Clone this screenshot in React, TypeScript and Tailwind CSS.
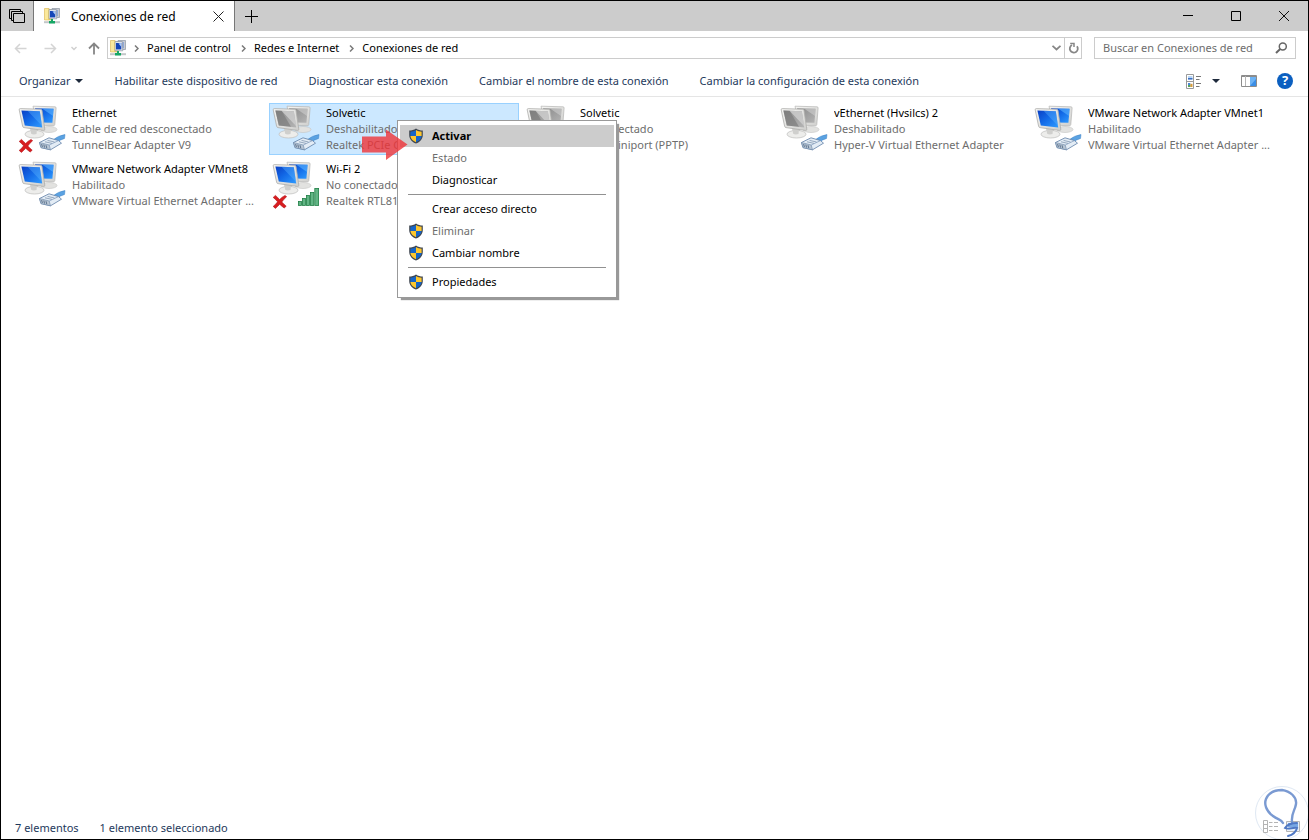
import type { ReactNode } from "react";

type AdapterState = "on" | "off";

interface Adapter {
  name: string;
  status: string;
  device: string;
  state: AdapterState;
  broken?: boolean;
  wifi?: boolean;
  selected?: boolean;
}

const adapters: Adapter[] = [
  { name: "Ethernet", status: "Cable de red desconectado", device: "TunnelBear Adapter V9", state: "on", broken: true },
  { name: "Solvetic", status: "Deshabilitado", device: "Realtek PCIe GBE", state: "off", selected: true },
  { name: "Solvetic", status: "Desconectado", device: "WAN Miniport (PPTP)", state: "off" },
  { name: "vEthernet (Hvsilcs) 2", status: "Deshabilitado", device: "Hyper-V Virtual Ethernet Adapter", state: "off" },
  { name: "VMware Network Adapter VMnet1", status: "Habilitado", device: "VMware Virtual Ethernet Adapter ...", state: "on" },
  { name: "VMware Network Adapter VMnet8", status: "Habilitado", device: "VMware Virtual Ethernet Adapter ...", state: "on" },
  { name: "Wi-Fi 2", status: "No conectado", device: "Realtek RTL81", state: "on", broken: true, wifi: true },
];

function Gradients() {
  return (
    <svg width="0" height="0" className="absolute" aria-hidden="true">
      <defs>
        <linearGradient id="screen-on" x1="0" y1="0" x2="1" y2="1">
          <stop offset="0" stopColor="#0a3fc4" />
          <stop offset="0.45" stopColor="#1268e6" />
          <stop offset="1" stopColor="#2f9bff" />
        </linearGradient>
        <linearGradient id="screen-off" x1="0" y1="0" x2="1" y2="1">
          <stop offset="0" stopColor="#8a8a8a" />
          <stop offset="1" stopColor="#b4b4b4" />
        </linearGradient>
        <linearGradient id="frame" x1="0" y1="0" x2="1" y2="1">
          <stop offset="0" stopColor="#f6f6f4" />
          <stop offset="1" stopColor="#cfcfcd" />
        </linearGradient>
      </defs>
    </svg>
  );
}

function AdapterIcon({ state, broken, wifi }: { state: AdapterState; broken?: boolean; wifi?: boolean }) {
  const on = state === "on";
  const fill = on ? "url(#screen-on)" : "url(#screen-off)";
  const sheen = on ? "#5cb4ff" : "#cfcfcf";
  return (
    <svg width="56" height="52" viewBox="0 0 56 52" className="shrink-0" aria-hidden="true">
      <ellipse cx="34" cy="26.5" rx="8" ry="3" fill="#e2e2e0" stroke="#c4c4c2" strokeWidth="0.6" />
      <path d="M18 3.2 L40 3.8 Q41.2 3.9 41.1 5 L39.8 21.5 Q39.6 22.8 38.2 22.8 L22 22 Z" fill="url(#frame)" stroke="#b5b5b3" strokeWidth="0.7" />
      <path d="M20 5.2 L38.6 5.7 L37.4 19.8 L24 19.5 Z" fill={fill} />
      <path d="M27 5.4 L38.6 5.7 L38 13 Z" fill={sheen} opacity="0.6" />
      <path d="M15 24 L23 25.5 L22.5 31 L16 30 Z" fill="#c9c9c7" />
      <ellipse cx="19.5" cy="31.2" rx="9.5" ry="3.8" fill="#ededeb" stroke="#bdbdbb" strokeWidth="0.7" />
      <path d="M15.5 25 L22 26 L21.5 31 Q18 32 16 30.5 Z" fill="#cfcfcd" />
      <path d="M5.2 5.6 L25.5 6.2 Q26.8 6.3 27 7.5 L29.8 26.2 Q29.9 27.6 28.4 27.4 L9 24.6 Q7.8 24.4 7.6 23.2 L4.2 6.8 Q4.1 5.6 5.2 5.6 Z" fill="url(#frame)" stroke="#adadab" strokeWidth="0.8" />
      <path d="M6.4 7.4 L24.8 8.2 L27.2 24.6 L9.8 22.4 Z" fill={fill} />
      <path d="M12.5 7.7 L24.8 8.2 L27 23 Z" fill={sheen} opacity={on ? 0.4 : 0.8} />
      {!on && <path d="M6.4 7.4 L12.5 7.7 L22 23.8 L9.8 22.4 Z" fill="#777" opacity="0.6" />}
      {wifi ? (
        <g stroke="#1f7f45" strokeWidth="0.8" fill="#62b585">
          <rect x="29.4" y="42.4" width="3" height="4" />
          <rect x="33.4" y="39.4" width="3" height="7" />
          <rect x="37.4" y="36.4" width="3" height="10" />
          <rect x="41.4" y="33.4" width="3.4" height="13" />
          <rect x="45.8" y="29.4" width="3.8" height="17" />
        </g>
      ) : (
        <g strokeLinejoin="round">
          <path d="M38 37 Q43 32.5 50 31.5 L49.5 35.5 Q45 36.5 41.5 40 Z" fill="#5aa2e2" stroke="#3d80c4" strokeWidth="0.5" />
          <path d="M24.5 39.5 L34 34.8 L43.5 37.6 L46.5 40.2 L35.5 46.8 L26 44.6 Z" fill="#e3ecf5" stroke="#5f7fa6" strokeWidth="0.8" />
          <path d="M24.5 39.5 L34.2 42 L35.5 46.8 L26 44.6 Z" fill="#b9c6d4" stroke="#6a86a8" strokeWidth="0.6" />
          <path d="M34.2 42 L43.5 37.6" stroke="#7c98ba" strokeWidth="0.7" />
          <path d="M26.6 41 L27.4 44 M28.8 41.6 L29.6 44.6 M31 42.2 L31.8 45.2" stroke="#46607e" strokeWidth="0.8" />
          <path d="M30 38.8 L37 40.4 M32.5 37.4 L39.5 39" stroke="#8197b0" strokeWidth="0.8" />
        </g>
      )}
      {broken && (
        <path
          d="M4.2 38.4 L6.4 36.4 Q8.6 38.2 10.6 40.6 Q13 37.8 16.2 36.4 L17.6 37.8 Q14.8 40 12.8 43 Q14.8 45.2 17.2 47.2 L15.2 49 Q12.8 47.4 10.7 45.2 Q8.6 47.6 6.4 49.4 L4.2 47.4 Q6.8 45.4 8.6 42.8 Q6.6 40.4 4.2 38.4 Z"
          fill="#d81d20"
          stroke="#b00f14"
          strokeWidth="0.6"
        />
      )}
    </svg>
  );
}

function NetworkFolderIcon() {
  return (
    <svg width="16" height="16" viewBox="0 0 16 16" className="shrink-0" aria-hidden="true">
      <path d="M0.5 0.5 H5 L6 1.5 H8 V12 H0.5 Z" fill="#f6d76c" stroke="#dcb95a" strokeWidth="0.6" />
      <path d="M1 1 H4 V11.5 H1 Z" fill="#fbe99c" />
      <path d="M8 0.5 H15.5 V9.5 H8 Z" fill="#c9ccd2" stroke="#8c95a4" strokeWidth="0.7" />
      <path d="M12 2 H14 V8 H12 Z" fill="#8fa9d8" />
      <path d="M5 1.5 H12.3 L12.8 10.8 H5 Z" fill="#dfe3ea" stroke="#8c95a4" strokeWidth="0.7" />
      <path d="M6 3 H11.3 V9.4 H6 Z" fill="#1546b8" />
      <path d="M8.5 3.5 L11 3 V6.5 Z" fill="#a9caf8" />
      <path d="M0 13.2 H16 V15.2 H0 Z" fill="#c3c7c9" />
      <path d="M5 13 H11 V15.6 H5 Z M7 11 H9 V13 H7 Z" fill="#16a765" />
    </svg>
  );
}

function Shield() {
  return (
    <svg width="16" height="16" viewBox="0 0 16 16" className="shrink-0" aria-hidden="true">
      <path d="M8 0.6 C10 2 12.4 2.6 14.8 2.6 V7 C14.8 11 12 14 8 15.6 C4 14 1.2 11 1.2 7 V2.6 C3.6 2.6 6 2 8 0.6 Z" fill="#3f4650" />
      <path d="M8 2 C6.4 3 4.4 3.6 2.4 3.7 V8 H8 Z" fill="#1565c8" />
      <path d="M8 2 C9.6 3 11.6 3.6 13.6 3.7 V8 H8 Z" fill="#fdc72e" />
      <path d="M2.4 8 H8 V14.3 C4.8 12.8 2.7 10.8 2.4 8 Z" fill="#fdc72e" />
      <path d="M13.6 8 H8 V14.3 C11.2 12.8 13.3 10.8 13.6 8 Z" fill="#1565c8" />
    </svg>
  );
}

function MenuItem({ children, shield, bold, disabled }: { children: ReactNode; shield?: boolean; bold?: boolean; disabled?: boolean }) {
  return (
    <button
      type="button"
      role="menuitem"
      disabled={disabled}
      className={
        "flex h-[22px] w-full items-center gap-2 pl-2 text-left " +
        (bold ? "bg-[#cccccc] font-bold text-black" : disabled ? "text-[#6d6d6d]" : "text-black")
      }
    >
      <span className="w-4">{shield && <Shield />}</span>
      {children}
    </button>
  );
}

function ContextMenu() {
  return (
    <div
      role="menu"
      aria-label="Solvetic"
      className="absolute left-[127px] top-4 z-10 w-[220px] border border-[#999999] bg-white px-0.5 py-1 shadow-[3px_3px_1px_-1px_#999999]"
    >
      <MenuItem shield bold>Activar</MenuItem>
      <MenuItem disabled>Estado</MenuItem>
      <MenuItem>Diagnosticar</MenuItem>
      <hr className="mx-2 my-[3px] border-[#919191]" />
      <MenuItem>Crear acceso directo</MenuItem>
      <MenuItem shield disabled>Eliminar</MenuItem>
      <MenuItem shield>Cambiar nombre</MenuItem>
      <hr className="mx-2 my-[3px] border-[#919191]" />
      <MenuItem shield>Propiedades</MenuItem>
    </div>
  );
}

function PointerArrow() {
  return (
    <svg width="46" height="32" viewBox="0 0 46 32" className="pointer-events-none absolute left-[92px] top-[25px] z-20" aria-hidden="true">
      <path d="M0 7.5 H24 V0.5 L45.5 15.5 L24 31 V23.5 H0 Z" fill="#ef3338" opacity="0.8" />
    </svg>
  );
}

function AdapterTile({ adapter }: { adapter: Adapter }) {
  return (
    <li
      className={
        "relative flex h-[52px] border " +
        (adapter.selected ? "border-[#99d1ff] bg-[#cce8ff]" : "border-transparent")
      }
    >
      <div className="-my-px -ml-px">
        <AdapterIcon state={adapter.state} broken={adapter.broken} wifi={adapter.wifi} />
      </div>
      <div className="min-w-0 flex-1 py-px pl-px pr-1 leading-4">
        <p className="truncate text-black">{adapter.name}</p>
        <p className="truncate text-[#6d6d6d]">{adapter.status}</p>
        <p className="truncate text-[#6d6d6d]">{adapter.device}</p>
      </div>
      {adapter.selected && <ContextMenu />}
      {adapter.selected && <PointerArrow />}
    </li>
  );
}

function TitleBar() {
  return (
    <header className="flex h-[30px] shrink-0 bg-[#cccccc] text-black">
      <button type="button" aria-label="Conjuntos" className="flex w-8 items-center justify-center">
        <svg width="17" height="16" viewBox="0 0 17 16" fill="none" stroke="#000">
          <path d="M4.5 5.5 H15.5 V14.5 H4.5 Z" />
          <path d="M4.5 12.5 H2.5 V3.5 H13.5 V5.5" />
          <path d="M2.5 10.5 H0.5 V1.5 H11.5 V3.5" />
        </svg>
      </button>
      <div className="flex w-[202px] items-center border-x border-[#777777] bg-white pl-[10px] pr-2">
        <NetworkFolderIcon />
        <span className="flex-1 pl-[11px] pt-px text-[12px]">Conexiones de red</span>
        <button type="button" aria-label="Cerrar pestaña" className="flex size-4 items-center justify-center">
          <svg width="11" height="11" viewBox="0 0 11 11" stroke="#222">
            <path d="M0.5 0.5 L10.5 10.5 M10.5 0.5 L0.5 10.5" />
          </svg>
        </button>
      </div>
      <button type="button" aria-label="Nueva pestaña" className="flex w-8 items-center justify-center">
        <svg width="13" height="13" viewBox="0 0 13 13" stroke="#000">
          <path d="M6.5 0 V13 M0 6.5 H13" />
        </svg>
      </button>
      <div className="ml-auto flex">
        <button type="button" aria-label="Minimizar" className="flex w-12 items-center justify-center">
          <svg width="10" height="10" viewBox="0 0 10 10" stroke="#000"><path d="M0 4.5 H10" /></svg>
        </button>
        <button type="button" aria-label="Maximizar" className="flex w-12 items-center justify-center">
          <svg width="10" height="10" viewBox="0 0 10 10" stroke="#000" fill="none"><path d="M0.5 0.5 H9.5 V9.5 H0.5 Z" /></svg>
        </button>
        <button type="button" aria-label="Cerrar" className="flex w-12 items-center justify-center">
          <svg width="10" height="10" viewBox="0 0 10 10" stroke="#111"><path d="M0 0 L10 10 M10 0 L0 10" /></svg>
        </button>
      </div>
    </header>
  );
}

function Crumb({ children }: { children: string }) {
  return (
    <>
      <svg width="5" height="7" viewBox="0 0 5 7" fill="none" stroke="#7a7a7a" strokeWidth="1.5" className="shrink-0" aria-hidden="true">
        <path d="M1 0.5 L4 3.5 L1 6.5" />
      </svg>
      <a href="#" className="pr-0.5 text-black">{children}</a>
    </>
  );
}

function AddressRow() {
  return (
    <div className="flex h-[34px] shrink-0 items-center pl-[13px] pr-3">
      <nav className="flex w-[93px] items-center" aria-label="Historial">
        <button type="button" aria-label="Atrás" className="w-[30px]">
          <svg width="13" height="11" viewBox="0 0 13 11" fill="none" stroke="#d4d4d4" strokeWidth="1.5"><path d="M12.5 5.5 H1.5 M6 1 L1.5 5.5 L6 10" /></svg>
        </button>
        <button type="button" aria-label="Adelante" className="w-[27px]">
          <svg width="13" height="11" viewBox="0 0 13 11" fill="none" stroke="#d4d4d4" strokeWidth="1.5"><path d="M0.5 5.5 H11.5 M7 1 L11.5 5.5 L7 10" /></svg>
        </button>
        <button type="button" aria-label="Ubicaciones recientes" className="w-[17px]">
          <svg width="6" height="5" viewBox="0 0 6 5" fill="none" stroke="#cfcfcf" strokeWidth="1.4"><path d="M0.5 1 L3 3.5 L5.5 1" /></svg>
        </button>
        <button type="button" aria-label="Subir">
          <svg width="12" height="13" viewBox="0 0 12 13" fill="none" stroke="#868686" strokeWidth="1.8"><path d="M6 12.5 V1.5 M1 6.5 L6 1.5 L11 6.5" /></svg>
        </button>
      </nav>
      <div className="flex h-[22px] flex-1 items-stretch border border-[#cccccc]">
        <div className="flex flex-1 items-center gap-2 pl-0.5">
          <NetworkFolderIcon />
          <Crumb>Panel de control</Crumb>
          <Crumb>Redes e Internet</Crumb>
          <Crumb>Conexiones de red</Crumb>
        </div>
        <button type="button" aria-label="Ubicaciones anteriores" className="flex w-4 items-center justify-center">
          <svg width="9" height="6" viewBox="0 0 9 6" fill="none" stroke="#868686" strokeWidth="1.8"><path d="M0.5 0.8 L4.5 4.5 L8.5 0.8" /></svg>
        </button>
        <button type="button" aria-label="Actualizar" className="flex w-[17px] items-center justify-center border-l border-[#cccccc]">
          <svg width="11" height="12" viewBox="0 0 11 12" fill="none" stroke="#868686">
            <path d="M9 4.2 A4 4 0 1 1 4 3" strokeWidth="1.8" />
            <path d="M2.2 1.4 H6 V5" strokeWidth="1.5" />
          </svg>
        </button>
      </div>
      <label className="ml-3 flex h-[22px] w-[202px] items-center border border-[#cccccc] pl-2 pr-[7px]">
        <input type="search" aria-label="Buscar en Conexiones de red" placeholder="Buscar en Conexiones de red" className="min-w-0 flex-1 bg-transparent outline-none placeholder:text-[#6d6d6d]" />
        <svg width="13" height="12" viewBox="0 0 13 12" fill="none" stroke="#666" aria-hidden="true">
          <circle cx="7.8" cy="4.4" r="3.5" strokeWidth="1.5" />
          <path d="M5.2 7 L1 11" strokeWidth="2" />
        </svg>
      </label>
    </div>
  );
}

function Caret() {
  return (
    <svg width="8" height="4" viewBox="0 0 8 4" aria-hidden="true"><path d="M0 0 H8 L4 4 Z" fill="#1e2a3c" /></svg>
  );
}

function CommandBar() {
  return (
    <div className="flex h-8 shrink-0 items-center border-b border-[#e5e5e5] pl-[18px] pr-[15px] pt-px text-[#1e395b]">
      <div className="flex items-center gap-[31px]">
        <button type="button" className="flex items-center gap-[5px]">Organizar <Caret /></button>
        <button type="button">Habilitar este dispositivo de red</button>
        <button type="button">Diagnosticar esta conexión</button>
        <button type="button">Cambiar el nombre de esta conexión</button>
        <button type="button">Cambiar la configuración de esta conexión</button>
      </div>
      <div className="ml-auto flex items-center">
        <button type="button" aria-label="Cambiar la vista" className="flex items-center gap-[11px]">
          <svg width="15" height="15" viewBox="0 0 15 15" fill="none">
            <path d="M0.5 0.5 H7.5 V14.5 H0.5 Z M0.5 7.5 H7.5" stroke="#9a9a9a" />
            <path d="M2 2 H6.5 V5 H2 Z" fill="#b9d6f5" />
            <path d="M2 4 H6.5 V5.6 H2 Z" fill="#3a6fc4" />
            <path d="M2 9 H4.3 V11 H2 Z" fill="#4a86d8" />
            <path d="M4.3 9.8 H6.5 V13 H4.3 Z" fill="#d99a3a" />
            <path d="M2 11 H4.3 V13 H2 Z" fill="#56a35a" />
            <path d="M10 2.5 H15 M10 5.5 H13.5 M10 9.5 H15 M10 12.5 H13.5" stroke="#777" />
          </svg>
          <Caret />
        </button>
        <button type="button" aria-label="Panel de vista previa" className="ml-[21px]">
          <svg width="16" height="12" viewBox="0 0 16 12" fill="none">
            <path d="M0.5 0.5 H15.5 V11.5 H0.5 Z" fill="#fff" stroke="#8c8c8c" />
            <path d="M0.5 1.5 H15.5" stroke="#8c8c8c" />
            <path d="M4.5 1 V11" stroke="#b5b5b5" />
            <path d="M9 2 H15 V11 H9 Z" fill="#3b8ee6" />
            <path d="M9 11 L15 4 V2 H9 Z" fill="#6db3f5" />
          </svg>
        </button>
        <button type="button" aria-label="Ayuda" className="ml-5 flex size-4 items-center justify-center rounded-full bg-[#0b5fc0] text-[13px] font-bold text-white">?</button>
      </div>
    </div>
  );
}

function StatusBar() {
  return (
    <footer className="relative flex h-[22px] shrink-0 items-center gap-[21px] pl-[14px] text-[#1e395b]">
      <span>7 elementos</span>
      <span>1 elemento seleccionado</span>
      <svg width="54" height="54" viewBox="0 0 54 54" fill="none" className="absolute bottom-0 right-0" aria-hidden="true">
        <circle cx="28" cy="28" r="26.5" fill="#fff" stroke="#dfe8f3" />
        <g stroke="#b4b4b4">
          <path d="M9.5 35.5 H13.5 V47.5 H9.5 Z M9.5 39.5 H13.5 M9.5 43.5 H13.5 M15 37.5 H18.5 M20 37.5 H24 M15 41.5 H18.5 M20 41.5 H24 M15 45.5 H18.5 M20 45.5 H24" />
          <path d="M32.5 36.5 H45.5 V46.5 H32.5 Z" fill="#e8f0fa" />
        </g>
        <path d="M34 38 H44 V42 H34 Z" fill="#78a7e4" />
        <path d="M29 38 C27 34 24 35 19 31 C12 26 10 19 12 14 C15 7 22 5 28 5 C36 6 43 12 42 19 C41 26 37 28 38 37" stroke="#7a9ad2" strokeWidth="2.4" strokeLinecap="round" />
        <path d="M43 38 C38 38 33 40 31 43 C34 45 39 42 43 43 C42 47 38 50 34 51" stroke="#4f78c4" strokeWidth="2" strokeLinecap="round" />
      </svg>
    </footer>
  );
}

export default function App() {
  return (
    <div className="flex h-screen flex-col overflow-hidden border border-black bg-white font-['Noto_Sans','Open_Sans',sans-serif] text-[11px]">
      <Gradients />
      <TitleBar />
      <AddressRow />
      <CommandBar />
      <main className="flex-1 pl-[14px] pt-[6px]">
        <ul className="grid grid-cols-[repeat(auto-fill,250px)] gap-1">
          {adapters.map((adapter) => (
            <AdapterTile key={adapter.name + adapter.device} adapter={adapter} />
          ))}
        </ul>
      </main>
      <StatusBar />
    </div>
  );
}
